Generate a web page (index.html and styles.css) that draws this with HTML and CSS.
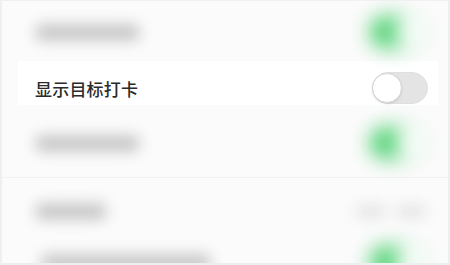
FILE: index.html
```html
<!DOCTYPE html>
<html lang="zh">
<head>
<meta charset="utf-8">
<link rel="stylesheet" href="styles.css">
</head>
<body>
<div class="page">
  <div class="row blurred r1">
    <div class="bar w105"></div>
    <div class="switch on"><div class="knob"></div></div>
  </div>
  <div class="row sharp">
    <span class="label">显示目标打卡</span>
    <div class="switch off"><div class="knob"></div></div>
  </div>
  <div class="row blurred r3">
    <div class="bar w105"></div>
    <div class="switch on"><div class="knob"></div></div>
  </div>
  <div class="row blurred r4">
    <div class="bar w70"></div>
    <div class="values"><div class="vbar"></div><div class="vbar"></div></div>
  </div>
  <div class="row blurred r5">
    <div class="bar w170"></div>
    <div class="switch on"><div class="knob"></div></div>
  </div>
</div>
</body>
</html>
```

FILE: styles.css
```css
html, body {
  margin: 0;
  padding: 0;
  background: #f6f6f6;
}
.page {
  width: 450px;
  height: 265px;
  box-sizing: border-box;
  border-left: 2px solid #efefef;
  border-right: 2px solid #efefef;
  border-top: 1px solid #f0f0f0;
  border-bottom: 2px solid #eeeeee;
  background: #fbfbfb;
  overflow: hidden;
  display: flex;
  flex-direction: column;
  font-family: "Noto Sans CJK SC", "Noto Sans", sans-serif;
}
.row {
  display: flex;
  align-items: center;
  justify-content: space-between;
  flex-shrink: 0;
  box-sizing: border-box;
}
.blurred {
  padding: 0 20px 0 33px;
}
.blurred .bar,
.blurred .vbar {
  filter: blur(7px);
}
.blurred .switch {
  filter: blur(10px);
}
.r1 { height: 60px; padding-top: 2px; }
.r3 { height: 73px; padding-top: 4px; border-bottom: 1px solid #f2f2f2; }
.r4 { height: 64px; padding-top: 2px; }
.r5 { height: 40px; }
.sharp {
  height: 44px;
  margin: 0 10px 0 16px;
  padding: 10px 10px 0 17px;
  background: #ffffff;
}
.label {
  font-size: 17px;
  font-weight: 500;
  color: #2b2b2b;
  letter-spacing: 0.2px;
}
.bar {
  height: 17px;
  border-radius: 8px;
  background: #c8c8c8;
}
.w105 { width: 105px; }
.w70 { width: 72px; }
.w170 { width: 170px; margin-left: 6px; }
.switch {
  width: 56px;
  height: 32px;
  border-radius: 16px;
  box-sizing: border-box;
  position: relative;
  display: flex;
  align-items: center;
}
.switch.off {
  background: #e4e4e4;
  border: 1px solid #e0e0e0;
}
.switch.on {
  background: #48cf6c;
  justify-content: flex-end;
  margin-right: 2px;
}
.knob {
  width: 30px;
  height: 30px;
  border-radius: 50%;
  background: #ffffff;
  box-sizing: border-box;
}
.switch.off .knob {
  border: 1px solid #d6d6d6;
  box-shadow: 0 1px 2px rgba(0,0,0,0.12);
  margin-left: -1px;
}
.switch.on .knob {
  margin-right: 1px;
}
.values {
  display: flex;
  gap: 10px;
  margin-right: 2px;
}
.vbar {
  width: 30px;
  height: 13px;
  border-radius: 6px;
  background: #e4e4e4;
}
```
